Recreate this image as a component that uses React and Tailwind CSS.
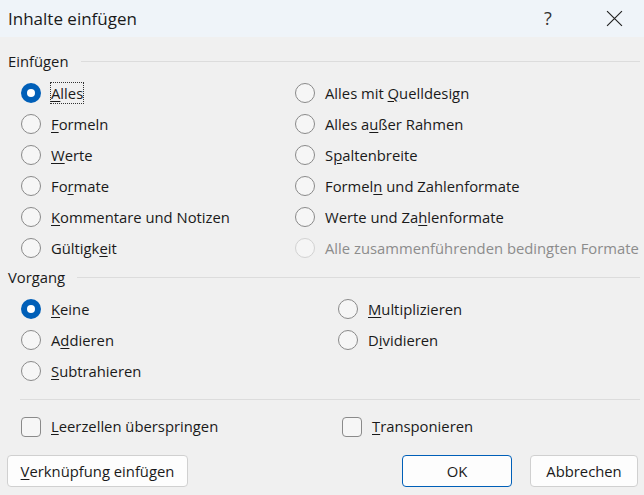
import React from "react";

const font = { fontFamily: '"Open Sans", "Noto Sans", sans-serif' };

// label with one underlined access-key letter
const Label = ({ text, u, disabled }) => {
  const i = u == null ? -1 : u;
  return (
    <span className={disabled ? "text-[#8c8c8c]" : "text-[#1a1a1a]"}>
      {i < 0 ? (
        text
      ) : (
        <>
          {text.slice(0, i)}
          <span className="underline underline-offset-2">{text[i]}</span>
          {text.slice(i + 1)}
        </>
      )}
    </span>
  );
};

const Radio = ({ text, u, checked, disabled, focus }) => (
  <div className="flex items-center h-[31px]">
    {checked ? (
      <span className="w-[20px] h-[20px] rounded-full bg-[#005fb8] flex items-center justify-center">
        <span className="w-[8px] h-[8px] rounded-full bg-white" />
      </span>
    ) : (
      <span
        className={
          "w-[20px] h-[20px] rounded-full border " +
          (disabled ? "border-[#d2d2d2] bg-[#f5f5f5]" : "border-[#8a8a8a] bg-[#f6f6f6]")
        }
      />
    )}
    <span
      className={
        "ml-[10px] leading-[20px] " +
        (focus ? "outline outline-1 outline-dotted outline-[#333] outline-offset-0" : "")
      }
    >
      <Label text={text} u={u} disabled={disabled} />
    </span>
  </div>
);

const Check = ({ text, u }) => (
  <div className="flex items-center h-[31px]">
    <span className="w-[20px] h-[20px] rounded-[4px] border border-[#8a8a8a] bg-[#f6f6f6]" />
    <span className="ml-[10px]">
      <Label text={text} u={u} />
    </span>
  </div>
);

const Header = ({ title }) => (
  <div className="flex items-center h-[20px] pl-[8px] pr-[4px]">
    <span className="text-[#1a1a1a]">{title}</span>
    <div className="flex-1 ml-[12px] h-px bg-[#dcdcdc]" />
  </div>
);

export default function App() {
  return (
    <div
      className="w-[644px] h-[495px] bg-[#f0f0f0] text-[14.8px] overflow-hidden flex flex-col"
      style={font}
    >
      <div className="h-[37px] bg-[#eff4f9] flex items-center pl-[8px] shrink-0">
        <span className="text-[17px] text-[#1a1a1a] flex-1">Inhalte einfügen</span>
        <span className="text-[18px] text-[#333] w-[20px] text-center mr-[48px]">?</span>
        <svg width="17" height="17" viewBox="0 0 16 16" className="mr-[21px]">
          <path d="M1 1 L15 15 M15 1 L1 15" stroke="#222" strokeWidth="1.1" />
        </svg>
      </div>

      <div className="mt-[14px]">
        <Header title="Einfügen" />
      </div>
      <div className="grid grid-cols-[274px_1fr] pl-[21px] mt-[6px]">
        <Radio text="Alles" u={0} checked focus />
        <Radio text="Alles mit Quelldesign" u={10} />
        <Radio text="Formeln" u={0} />
        <Radio text="Alles außer Rahmen" u={7} />
        <Radio text="Werte" u={0} />
        <Radio text="Spaltenbreite" u={1} />
        <Radio text="Formate" u={2} />
        <Radio text="Formeln und Zahlenformate" u={6} />
        <Radio text="Kommentare und Notizen" u={0} />
        <Radio text="Werte und Zahlenformate" u={12} />
        <Radio text="Gültigkeit" u={7} />
        <Radio text="Alle zusammenführenden bedingten Formate" disabled />
      </div>

      <div className="mt-[4px]">
        <Header title="Vorgang" />
      </div>
      <div className="grid grid-cols-[317px_1fr] pl-[21px] mt-[6px]">
        <Radio text="Keine" u={0} checked />
        <Radio text="Multiplizieren" u={0} />
        <Radio text="Addieren" u={1} />
        <Radio text="Dividieren" u={1} />
        <Radio text="Subtrahieren" u={0} />
      </div>

      <div className="ml-[20px] mr-[4px] mt-[13px] h-px bg-[#dcdcdc]" />

      <div className="grid grid-cols-[321px_1fr] pl-[21px] mt-[11px]">
        <Check text="Leerzellen überspringen" u={0} />
        <Check text="Transponieren" u={0} />
      </div>

      <div className="flex items-center mt-[13px] px-[7px]">
        <button className="h-[32px] w-[181px] rounded-[4px] border border-[#d0d0d0] bg-[#fdfdfd] text-[#1a1a1a]">
          <Label text="Verknüpfung einfügen" u={0} />
        </button>
        <div className="flex-1" />
        <button className="h-[32px] w-[110px] rounded-[4px] border border-[#005fb8] bg-[#fdfdfd] text-[#1a1a1a]">
          OK
        </button>
        <button className="h-[32px] w-[108px] ml-[18px] mr-[-1px] rounded-[4px] border border-[#d0d0d0] bg-[#fdfdfd] text-[#1a1a1a]">
          Abbrechen
        </button>
      </div>
    </div>
  );
}
